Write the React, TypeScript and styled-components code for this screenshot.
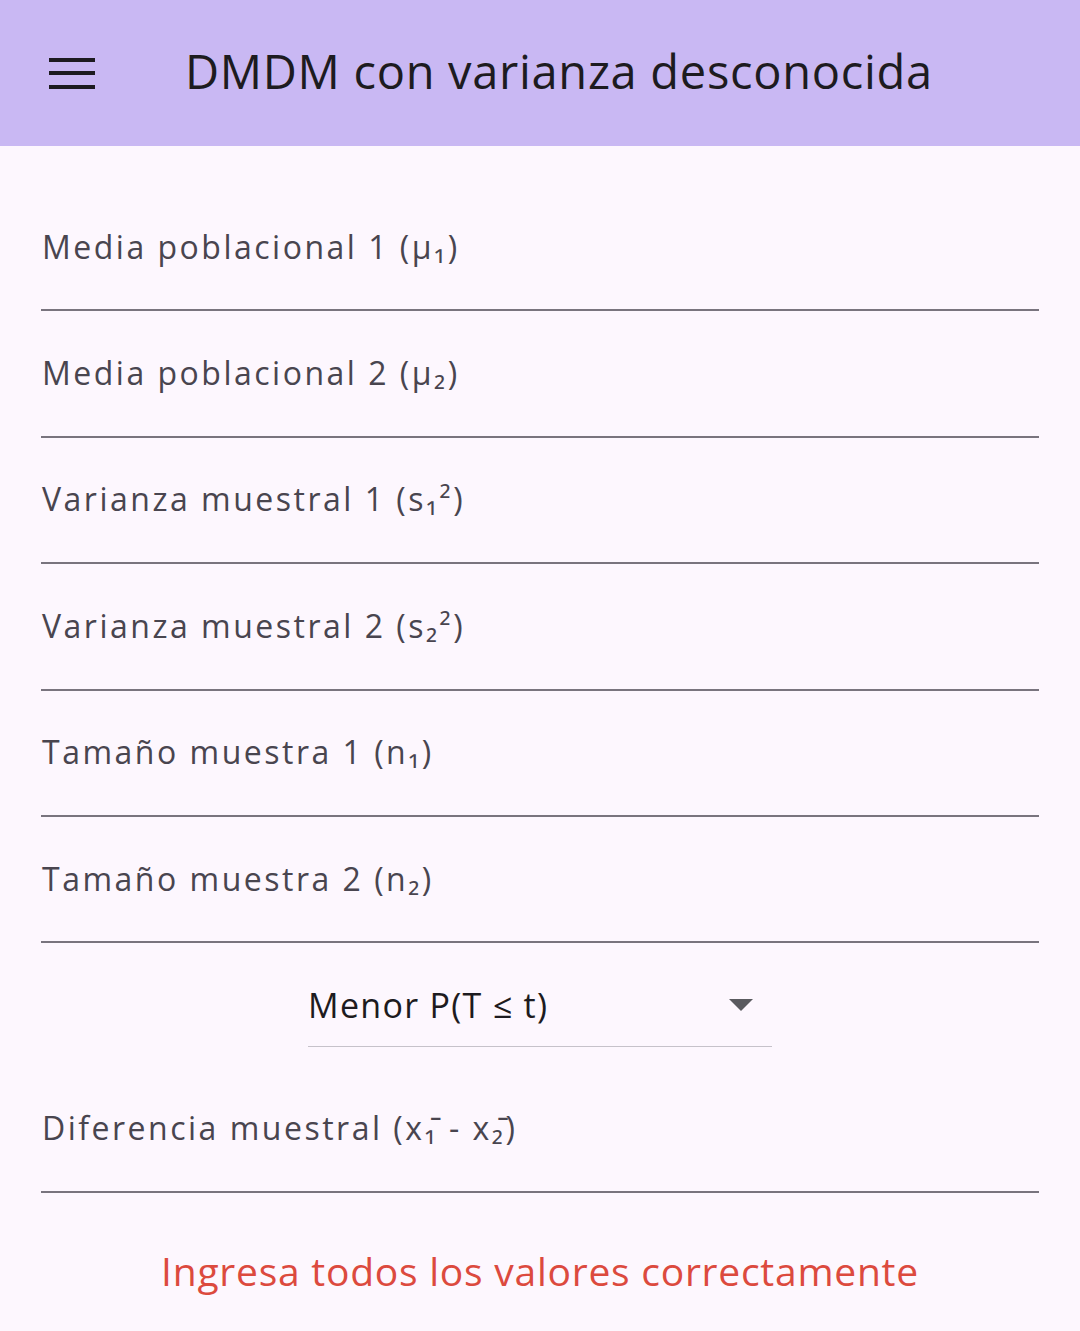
import React from "react";
import styled, { createGlobalStyle } from "styled-components";

const Global = createGlobalStyle`
  html, body { margin: 0; padding: 0; background: #fdf7fe; }
  body { font-family: "Open Sans", "Noto Sans", sans-serif; }
  * { box-sizing: border-box; }
`;

const Page = styled.div`
  width: 1080px;
  min-height: 1331px;
  background: #fdf7fe;
  display: flex;
  flex-direction: column;
`;

const AppBar = styled.header`
  height: 146px;
  background: #c9b8f3;
  display: flex;
  align-items: center;
  padding-left: 49px;
  padding-bottom: 4px;
`;

const MenuButton = styled.div`
  width: 46px;
  height: 31px;
  display: flex;
  flex-direction: column;
  justify-content: space-between;
  margin-right: 90px;
  margin-top: 4px;
`;

const MenuBar = styled.span`
  display: block;
  height: 4px;
  background: #1d1b20;
`;

const Title = styled.h1`
  margin: 0;
  font-family: "Open Sans", "Noto Sans", sans-serif;
  font-weight: 400;
  font-size: 47px;
  color: #1d1b20;
  letter-spacing: 0.7px;
`;

const Body = styled.main`
  display: flex;
  flex-direction: column;
  padding: 39px 41px 0 41px;
`;

const Field = styled.div`
  height: 126.4px;
  display: flex;
  align-items: center;
  padding-bottom: 2px;
  border-bottom: 2px solid #79747e;
`;

const Label = styled.span`
  font-size: 32px;
  letter-spacing: 2.5px;
  color: #49454f;
  padding-left: 1px;
`;

const DropdownWrap = styled.div`
  display: flex;
  justify-content: center;
  padding-top: 22px;
  padding-bottom: 19px;
`;

const Dropdown = styled.div`
  width: 464px;
  height: 82px;
  display: flex;
  align-items: center;
  justify-content: space-between;
  border-bottom: 1px solid #c6c2ca;
  padding-bottom: 2px;
`;

const DropdownText = styled.span`
  font-size: 34px;
  letter-spacing: 1.3px;
  color: #1d1b20;
`;

const Caret = styled.span`
  width: 0;
  height: 0;
  border-left: 12px solid transparent;
  border-right: 12px solid transparent;
  border-top: 12px solid #5a5a5f;
  margin-right: 19px;
`;

const ErrorText = styled.p`
  margin: 51px 0 0 0;
  text-align: center;
  font-size: 39px;
  color: #dc4a3e;
  letter-spacing: 0.75px;
`;

const labels = [
  "Media poblacional 1 (μ₁)",
  "Media poblacional 2 (μ₂)",
  "Varianza muestral 1 (s₁²)",
  "Varianza muestral 2 (s₂²)",
  "Tamaño muestra 1 (n₁)",
  "Tamaño muestra 2 (n₂)",
];

export default function App() {
  return (
    <Page>
      <Global />
      <AppBar>
        <MenuButton>
          <MenuBar />
          <MenuBar />
          <MenuBar />
        </MenuButton>
        <Title>DMDM con varianza desconocida</Title>
      </AppBar>
      <Body>
        {labels.map((l) => (
          <Field key={l}>
            <Label>{l}</Label>
          </Field>
        ))}
        <DropdownWrap>
          <Dropdown>
            <DropdownText>Menor P(T ≤ t)</DropdownText>
            <Caret />
          </Dropdown>
        </DropdownWrap>
        <Field>
          <Label>Diferencia muestral (x₁̄ - x₂̄)</Label>
        </Field>
        <ErrorText>Ingresa todos los valores correctamente</ErrorText>
      </Body>
    </Page>
  );
}
